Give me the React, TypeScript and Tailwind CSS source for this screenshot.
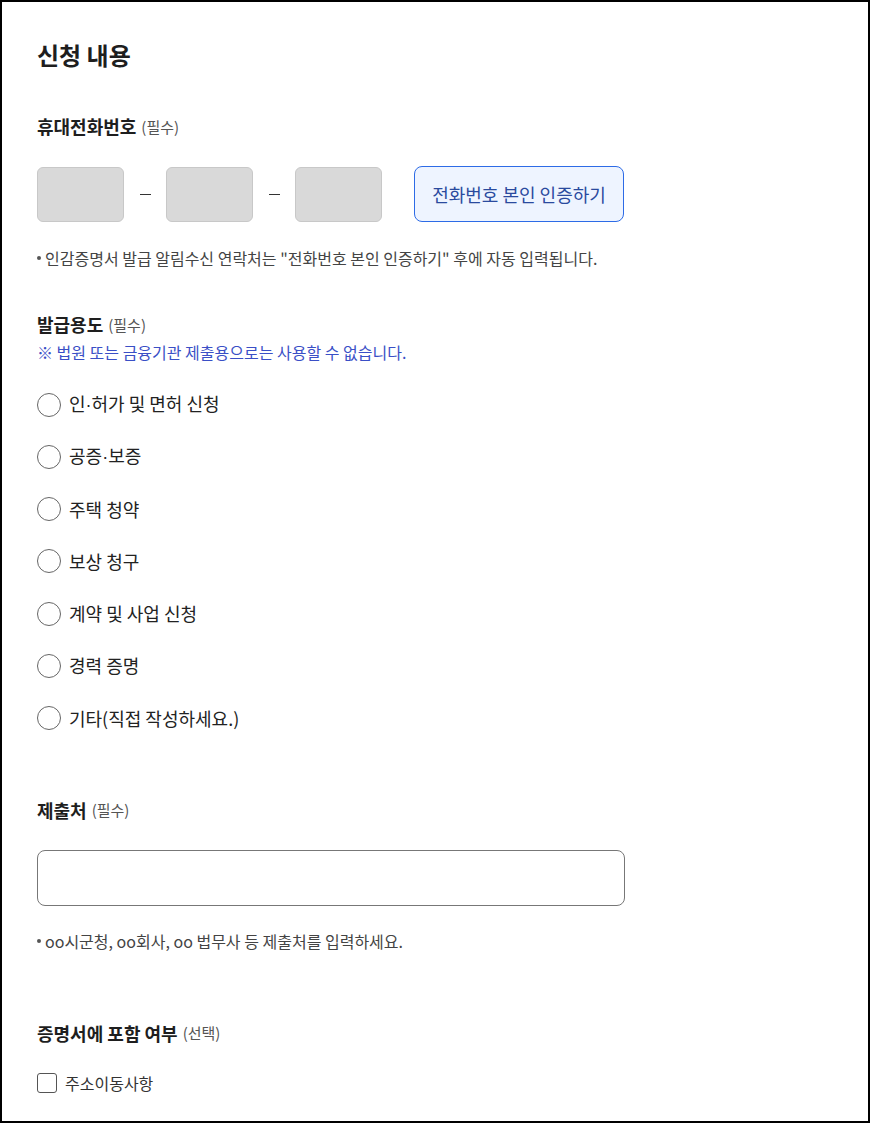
import { useState } from 'react'

const purposes = [
  ['인', '허가 및 면허 신청'],
  ['공증', '보증'],
  ['주택 청약'],
  ['보상 청구'],
  ['계약 및 사업 신청'],
  ['경력 증명'],
  ['기타(직접 작성하세요.)'],
]

function Label({ title, tag }: { title: string; tag: string }) {
  return (
    <p className="flex h-[26px] items-center gap-[5px] text-[#1e1e1e]">
      <span className="text-[18px] font-bold leading-none">{title}</span>
      <span className="text-[15px] leading-none text-[#555]">{tag}</span>
    </p>
  )
}

function Note({ children }: { children: React.ReactNode }) {
  return (
    <p className="flex h-[22px] items-center text-[16px] leading-[22px] text-[#444]">
      <span className="mr-[4px] h-[4px] w-[4px] rounded-full bg-[#555]" />
      {children}
    </p>
  )
}

function Dash() {
  return (
    <span className="flex w-[42px] justify-center">
      <span className="h-px w-[11px] bg-[#333]" />
    </span>
  )
}

export default function App() {
  const [purpose, setPurpose] = useState<number | null>(null)
  const [includeAddress, setIncludeAddress] = useState(false)

  return (
    <div
      className="h-[1123px] w-[870px] overflow-hidden border-2 border-black bg-white px-[35px] text-[#1e1e1e]"
      style={{ fontFamily: '"Noto Sans CJK KR", "Noto Sans", sans-serif' }}
    >
      <h2 className="mt-[37px] h-[32px] text-[24px] font-bold leading-[32px]">신청 내용</h2>

      {/* 휴대전화번호 */}
      <div className="mt-[42px]">
        <Label title="휴대전화번호" tag="(필수)" />
        <div className="mt-[27px] flex items-center">
          <input className="h-[55px] w-[87px] rounded-[6px] border border-[#c8c8c8] bg-[#d9d9d9]" />
          <Dash />
          <input className="h-[55px] w-[87px] rounded-[6px] border border-[#c8c8c8] bg-[#d9d9d9]" />
          <Dash />
          <input className="h-[55px] w-[87px] rounded-[6px] border border-[#c8c8c8] bg-[#d9d9d9]" />
          <button
            type="button"
            className="ml-[32px] h-[56px] w-[210px] rounded-[8px] border border-[#2d6be6] bg-[#eef4ff] text-[18px] text-[#2a4a9e]"
          >
            전화번호 본인 인증하기
          </button>
        </div>
        <div className="mt-[25px]">
          <Note>인감증명서 발급 알림수신 연락처는 "전화번호 본인 인증하기" 후에 자동 입력됩니다.</Note>
        </div>
      </div>

      {/* 발급용도 */}
      <div className="mt-[42px]">
        <Label title="발급용도" tag="(필수)" />
        <p className="mt-[4px] h-[22px] text-[16px] leading-[22px] text-[#3a4fc6]">
          ※ 법원 또는 금융기관 제출용으로는 사용할 수 없습니다.
        </p>
        <ul className="mt-[29px] flex flex-col gap-[27.3px]">
          {purposes.map((parts, i) => (
            <li key={i}>
              <label className="flex h-[25px] cursor-pointer items-center gap-[8px]">
                <input
                  type="radio"
                  name="purpose"
                  checked={purpose === i}
                  onChange={() => setPurpose(i)}
                  className="sr-only"
                />
                <span className="flex h-[24px] w-[24px] items-center justify-center rounded-full border border-[#666] bg-white">
                  {purpose === i && <span className="h-[11px] w-[11px] rounded-full bg-[#2d6be6]" />}
                </span>
                <span className="text-[18px] leading-[25px] text-[#222]">
                  {parts[0]}
                  {parts.length > 1 && (
                    <>
                      <span style={{ fontFamily: '"Liberation Sans", sans-serif' }}>·</span>
                      {parts[1]}
                    </>
                  )}
                </span>
              </label>
            </li>
          ))}
        </ul>
      </div>

      {/* 제출처 */}
      <div className="mt-[66px]">
        <Label title="제출처" tag="(필수)" />
        <input className="mt-[27px] block h-[56px] w-[588px] rounded-[8px] border border-[#777] px-4 text-[16px]" />
        <div className="mt-[24px]">
          <Note>oo시군청, oo회사, oo 법무사 등 제출처를 입력하세요.</Note>
        </div>
      </div>

      {/* 증명서에 포함 여부 */}
      <div className="mt-[68px]">
        <Label title="증명서에 포함 여부" tag="(선택)" />
        <label className="mt-[25px] flex h-[24px] cursor-pointer items-center gap-[8px]">
          <input
            type="checkbox"
            checked={includeAddress}
            onChange={() => setIncludeAddress(!includeAddress)}
            className="sr-only"
          />
          <span className="h-[20px] w-[20px] rounded-[3px] border border-[#555] bg-white" />
          <span className="text-[16px] leading-[24px] text-[#333]">주소이동사항</span>
        </label>
      </div>
    </div>
  )
}
